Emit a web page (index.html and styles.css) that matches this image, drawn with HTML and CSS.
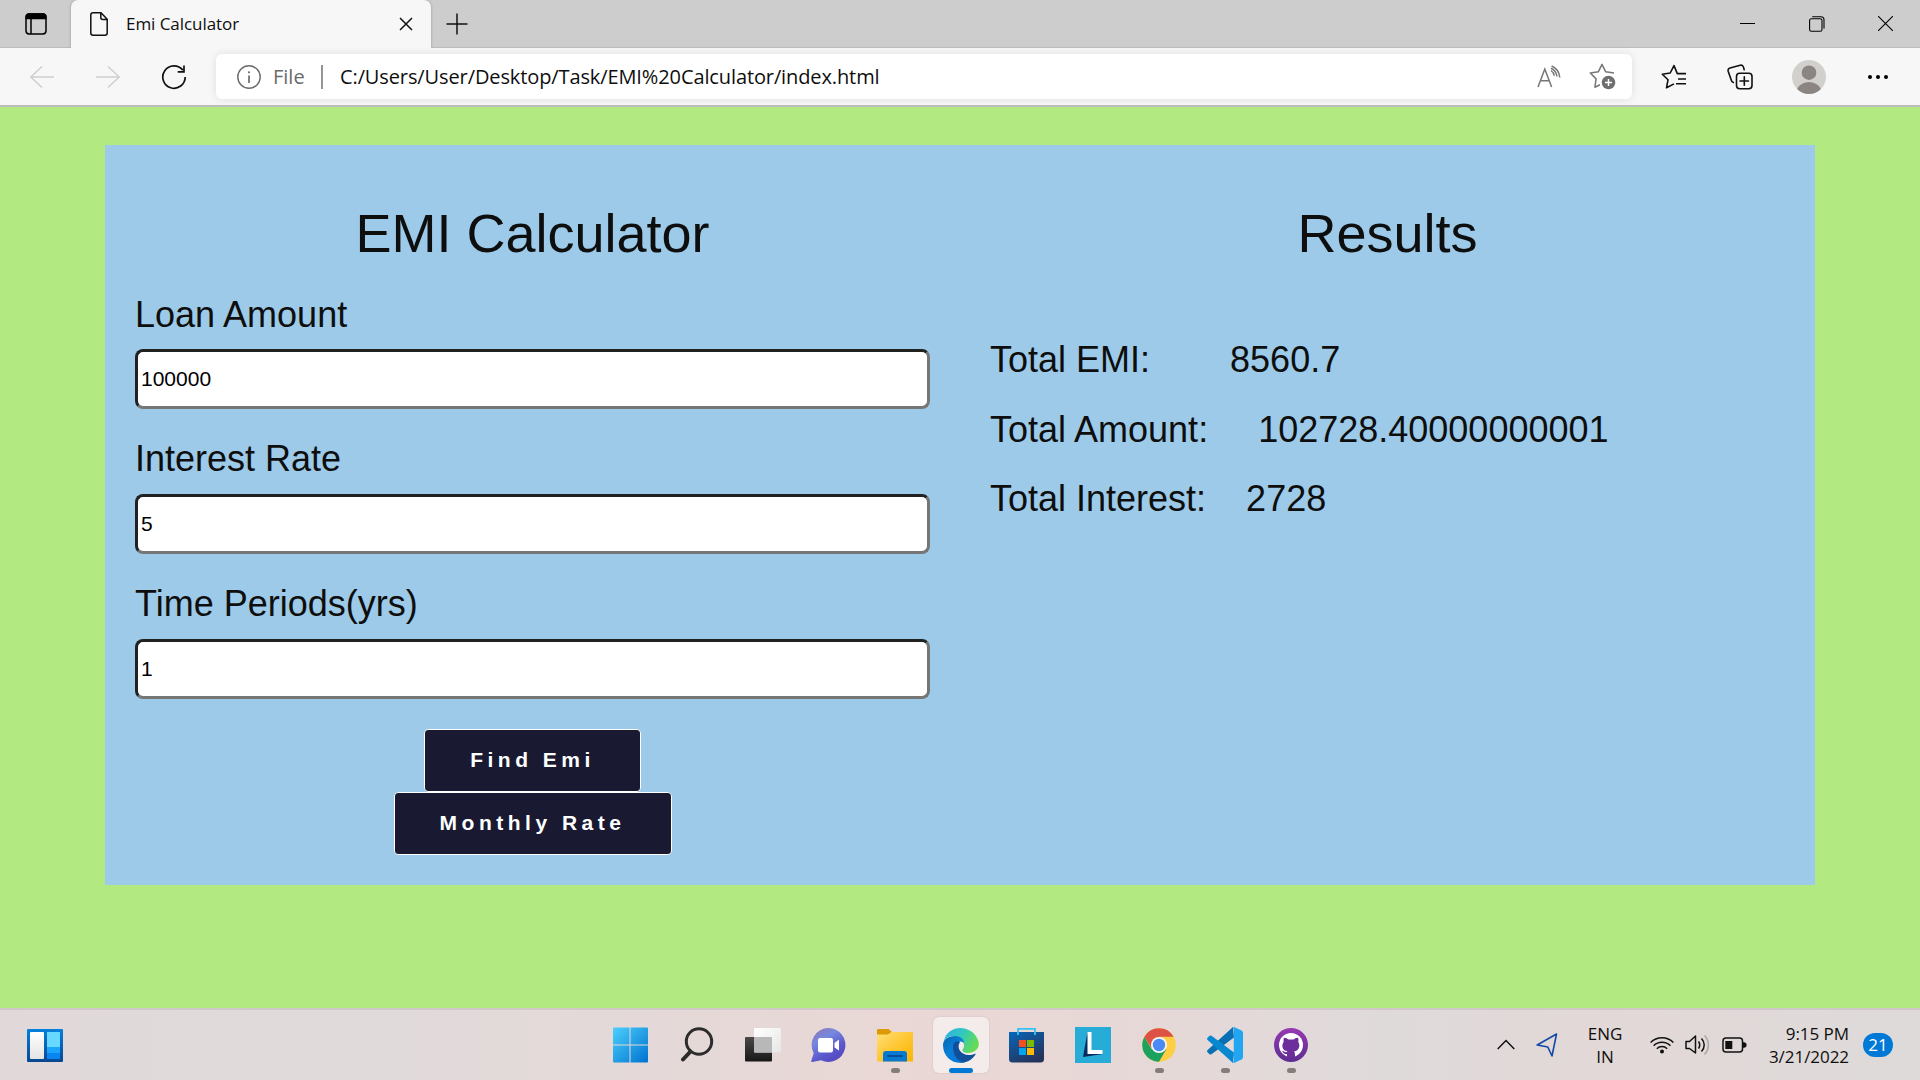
FILE: index.html
```
<!DOCTYPE html>
<html lang="en">
<head>
<meta charset="utf-8">
<title>Emi Calculator</title>
<link rel="stylesheet" href="styles.css">
</head>
<body>
<div class="screen">
  <header class="tabstrip">
    <div class="tab-menu">
      <svg width="22" height="22" viewBox="0 0 22 22" fill="none" stroke="#000" stroke-width="1.5"><rect x="1" y="1" width="20" height="20" rx="3.2"/><path d="M1.2 5.6V4a3 3 0 0 1 3-3h13.600a3 3 0 0 1 3 3v1.600z" fill="#000"/><path d="M6 6v15"/></svg>
    </div>
    <div class="tab">
      <svg class="tab-doc" width="18" height="24" viewBox="0 0 18 24" fill="none" stroke="#111" stroke-width="1.500" stroke-linejoin="round"><path d="M3 .8h8l6.200 6.500v13.700a2.200 2.200 0 0 1-2.200 2.200H3A2.200 2.200 0 0 1 .8 21V3A2.200 2.200 0 0 1 3 .8zM10.800 1v4.500a2 2 0 0 0 2 2H17"/></svg>
      <span class="tab-title">Emi Calculator</span>
      <svg class="tab-close" width="14" height="14" viewBox="0 0 14 14" stroke="#111" stroke-width="1.500"><path d="M1 1l12 12M13 1L1 13"/></svg>
    </div>
    <div class="tab-new">
      <svg width="22" height="22" viewBox="0 0 22 22" stroke="#111" stroke-width="1.500"><path d="M11 .5v21M.5 11h21"/></svg>
    </div>
    <div class="window-controls">
      <span class="win-cell"><svg width="15" height="15" viewBox="0 0 15 15" stroke="#000"><path d="M0 7.500h15"/></svg></span>
      <span class="win-cell"><svg width="16" height="16" viewBox="0 0 16 16" fill="none" stroke="#000" stroke-width="1.100"><rect x=".6" y="2.800" width="12.400" height="12.400" rx="1.800"/><path d="M3.200.7h8.800a3 3 0 0 1 3 3v8.800"/></svg></span>
      <span class="win-cell"><svg width="15" height="15" viewBox="0 0 15 15" stroke="#000" stroke-width="1.100"><path d="M0 0l15 15M15 0L0 15"/></svg></span>
    </div>
  </header>

  <nav class="toolbar">
    <span class="tool"><svg width="26" height="24" viewBox="0 0 26 24" fill="none" stroke="#cfcfcf" stroke-width="1.500"><path d="M25 12H1.500M13 1.500L1.800 12 13 22.500"/></svg></span>
    <span class="tool"><svg width="26" height="24" viewBox="0 0 26 24" fill="none" stroke="#cfcfcf" stroke-width="1.500"><path d="M1 12h23.500M13 1.500L24.200 12 13 22.500"/></svg></span>
    <span class="tool"><svg width="26" height="26" viewBox="0 0 26 26" fill="none" stroke="#111" stroke-width="1.700"><path d="M24.200 13A11.200 11.200 0 1 1 21.800 6.100M23 1.500v6.300h-6.300"/></svg></span>
    <div class="address">
      <svg width="24" height="24" viewBox="0 0 24 24" fill="none" stroke="#6b6b6b" stroke-width="1.400"><circle cx="12" cy="12" r="11.200"/><path d="M12 10.500V18" stroke-width="1.700"/><circle cx="12" cy="7.300" r="1.100" fill="#6b6b6b" stroke="none"/></svg>
      <span class="scheme">File</span>
      <span class="divider"></span>
      <span class="url">C:/Users/User/Desktop/Task/EMI%20Calculator/index.html</span>
      <svg class="read-aloud" width="24" height="24" viewBox="0 0 24 24" fill="none" stroke="#767676" stroke-width="1.500"><path d="M1 22L7.800 4 14.600 22M3.500 15.800h8.700M14 5.500c1.800 1.300 3 3 3.200 5.200M14.600 1c4.400 1.800 7.600 6 8.200 11.500M14 3.300c3.300 1.400 5.500 4.400 6 8.200"/></svg>
      <svg class="add-fav" width="27" height="27" viewBox="0 0 27 27"><path d="M25 10l-8.300-1.200L13 1.300 9.300 8.800 1.300 10l5.800 5.900-1.200 8.300 5-2.400" fill="none" stroke="#767676" stroke-width="1.500" stroke-linejoin="round"/><circle cx="19.500" cy="19.500" r="6.800" fill="#6e6e6e"/><path d="M19.500 16v7M16 19.500h7" stroke="#fff" stroke-width="1.500"/></svg>
    </div>
    <span class="tool"><svg width="26" height="26" viewBox="0 0 26 26" fill="none" stroke="#111" stroke-width="1.600" stroke-linejoin="round"><path d="M25 9.600h-8.700L13 1.600 9.200 9 1.300 10.200l5.700 5.600-1.500 8 7.500-3.900M17 15h8M15 19.800h10"/></svg></span>
    <span class="tool"><svg width="26" height="26" viewBox="0 0 26 26" fill="none" stroke="#111" stroke-width="1.600" stroke-linecap="round"><rect x="9.500" y="9.200" width="15.500" height="15.500" rx="3.200"/><path d="M17.300 12.700v8.500M13 17h8.500M6.400 18.500a3 3 0 0 1-2-2L1.200 7.300A2.600 2.600 0 0 1 3 4.100L13.200 1.300a2.600 2.600 0 0 1 3.200 1.800l.8 2.600"/></svg></span>
    <span class="tool tool-profile"><svg width="34" height="34" viewBox="0 0 34 34"><defs><clipPath id="face"><circle cx="17" cy="17" r="17"/></clipPath></defs><g clip-path="url(#face)"><rect width="34" height="34" fill="#d2d0cd"/><circle cx="17" cy="12.700" r="7.300" fill="#8a8583"/><ellipse cx="17" cy="32" rx="12.300" ry="10" fill="#8a8583"/></g></svg></span>
    <span class="tool"><svg width="22" height="6" viewBox="0 0 22 6" fill="#000"><circle cx="3" cy="3" r="2"/><circle cx="11" cy="3" r="2"/><circle cx="19" cy="3" r="2"/></svg></span>
  </nav>

  <main class="page">
    <div class="panel">
      <section class="column">
        <h1 class="heading">EMI Calculator</h1>
        <div class="field"><label class="label" for="loan">Loan Amount</label><input class="input" id="loan" type="text" value="100000"></div>
        <div class="field"><label class="label" for="rate">Interest Rate</label><input class="input" id="rate" type="text" value="5"></div>
        <div class="field"><label class="label" for="time">Time Periods(yrs)</label><input class="input" id="time" type="text" value="1"></div>
        <div class="actions">
          <button class="button" type="button">Find Emi</button>
          <button class="button button-wide" type="button">Monthly Rate</button>
        </div>
      </section>
      <section class="column">
        <h1 class="heading">Results</h1>
        <div class="results">
          <p class="result">Total EMI:&nbsp;&nbsp;&nbsp;&nbsp;&nbsp;&nbsp;&nbsp;&nbsp;8560.7</p>
          <p class="result">Total Amount:&nbsp;&nbsp;&nbsp;&nbsp;&nbsp;102728.40000000001</p>
          <p class="result">Total Interest:&nbsp;&nbsp;&nbsp;&nbsp;2728</p>
        </div>
      </section>
    </div>
  </main>

  <footer class="taskbar">
    <div class="task-left">
      <svg width="36" height="33" viewBox="0 0 36 33"><defs><linearGradient id="wg" x2="0" y2="1"><stop stop-color="#0580db"/><stop offset="1" stop-color="#08478f"/></linearGradient><linearGradient id="ww" x2="0" y2="1"><stop stop-color="#fff"/><stop offset="1" stop-color="#e4e4e4"/></linearGradient></defs><rect width="36" height="33" rx="1" fill="url(#wg)"/><rect x="3" y="3" width="14" height="27" rx="1" fill="url(#ww)"/><path d="M20 3h13v15H20z" fill="#67d8ff"/><path d="M20 18h13v6H20z" fill="#1aa4fb"/><path d="M20 24h13v6H20z" fill="#0885ee"/></svg>
    </div>
    <div class="apps">
      <span class="app"><svg width="36" height="36" viewBox="0 0 36 36"><defs><linearGradient id="win" x2="1" y2="1"><stop stop-color="#4cd0fd"/><stop offset="1" stop-color="#0072cf"/></linearGradient></defs><path d="M1 .5H16.500v17H0v-16a1 1 0 0 1 1-1zM17.500 .5h16.500a1 1 0 0 1 1 1v16H17.500zM0 18.500H16.500v17H1a1 1 0 0 1-1-1zM17.500 18.500H35v16a1 1 0 0 1-1 1H17.500z" fill="url(#win)"/></svg></span>
      <span class="app"><svg width="36" height="36" viewBox="0 0 36 36" fill="none" stroke="#2c2c2c"><circle cx="20" cy="14.500" r="12.700" stroke-width="3"/><path d="M11.500 24.500l-7.500 8" stroke-width="4" stroke-linecap="round"/></svg></span>
      <span class="app"><svg width="38" height="36" viewBox="0 0 38 36"><defs><linearGradient id="tv" x2="0" y2="1"><stop stop-color="#494949"/><stop offset="1" stop-color="#181818"/></linearGradient><linearGradient id="tw" x2="1" y2="1"><stop stop-color="#fff"/><stop offset="1" stop-color="#e6e6e6"/></linearGradient></defs><rect x="1" y="10" width="27" height="24.500" rx="1" fill="url(#tv)"/><rect x="10" y="1" width="27" height="24.500" rx="1" fill="url(#tw)"/><path d="M10 10h17a1 1 0 0 1 1 1v14.500H11a1 1 0 0 1-1-1z" fill="#b8b8b8"/></svg></span>
      <span class="app"><svg width="36" height="36" viewBox="0 0 36 36"><defs><linearGradient id="chat" x1=".2" x2=".8" y2="1"><stop stop-color="#8b78b9"/><stop offset=".3" stop-color="#7588df"/><stop offset=".65" stop-color="#5c59cc"/><stop offset="1" stop-color="#5147bd"/></linearGradient></defs><path d="M17.500 1a17 17 0 1 1-7.500 32.300L1.500 35c-1 .2-1.500-.6-1.200-1.500l2.400-7.300A17 17 0 0 1 17.500 1z" fill="url(#chat)"/><rect x="7" y="11" width="15" height="14.500" rx="2" fill="#fff"/><path d="M23.500 16l4.500-3.500v11L23.500 20.500z" fill="#fff"/></svg></span>
      <span class="app app-open"><svg width="36" height="34" viewBox="0 0 36 34"><defs><linearGradient id="fold" x2="1" y2="1"><stop stop-color="#ffe07b"/><stop offset=".45" stop-color="#ffc93a"/><stop offset="1" stop-color="#fcb400"/></linearGradient></defs><path d="M0 8V2a1 1 0 0 1 1-1h10.500l3.500 3H35a1 1 0 0 1 1 1v5z" fill="#dc9b04"/><path d="M0 6.500h11l3.500-2.500H35a1 1 0 0 1 1 1v28.500H0z" fill="url(#fold)"/><path d="M6 33.500V26a3 3 0 0 1 3-3h18a3 3 0 0 1 3 3v7.500z" fill="#0879d1"/><path d="M11 28h14" stroke="#064f98" stroke-width="1.800" stroke-linecap="round"/></svg></span>
      <span class="app app-active"><svg width="36" height="36" viewBox="0 0 36 36"><defs><linearGradient id="e1" x2="1" y2=".4"><stop stop-color="#2daeea"/><stop offset=".55" stop-color="#32c9bd"/><stop offset="1" stop-color="#64db55"/></linearGradient><linearGradient id="e2" x2=".8" y2="1"><stop stop-color="#0665ad"/><stop offset=".5" stop-color="#087fd8"/><stop offset="1" stop-color="#0676d2"/></linearGradient></defs><path d="M1 14C4-2 28-4 35 13c3 8-3 13-10 13-4 0-7-2-5-4 2-3 1-6-1-9C14 7 4 8 1 14z" fill="url(#e1)"/><path d="M0 18C0 12 6 9 12 9c5 0 9 3 9 7-5-4-11 1-9 8 2 6 6 10 10 11.500C10 38 0 30 0 18z" fill="url(#e2)"/><path d="M10 20c0-5 4-7 7-5-4 6 1 13 9 13 3 0 5-.7 7-1.500C30 32 25 35.500 20 35.500c-6-2-10-8-10-15.500z" fill="#104f99"/></svg></span>
      <span class="app"><svg width="36" height="36" viewBox="0 0 36 36"><defs><linearGradient id="store" x2=".6" y2="1"><stop stop-color="#0867b8"/><stop offset="1" stop-color="#25345d"/></linearGradient></defs><path d="M0 5h35v27a3.500 3.500 0 0 1-3.500 3.500h-28A3.500 3.500 0 0 1 0 32z" fill="url(#store)"/><path d="M9 8V1.800h17V8" fill="none" stroke="#35c2f4" stroke-width="1.800"/><path d="M10 13h7v7h-7z" fill="#f25022"/><path d="M18 13h7v7h-7z" fill="#7fba00"/><path d="M10 21h7v7h-7z" fill="#00a4ef"/><path d="M18 21h7v7h-7z" fill="#ffb900"/></svg></span>
      <span class="app"><svg width="36" height="36" viewBox="0 0 36 36"><path d="M0 0h36v36H0z" fill="#27abd7"/><path d="M12.500 5L8 30l20-3-14-3z" fill="#082b60"/><path d="M12.500 5h4v18h11v4h-15z" fill="#fff"/></svg></span>
      <span class="app app-open"><svg width="34" height="34" viewBox="0 0 34 34"><circle cx="17" cy="17" r="16.800" fill="#ffcf43"/><path d="M2.300 8.900A16.800 16.800 0 0 1 31.600 8.700H17L9.500 20z" fill="#de5145"/><path d="M2.300 8.900A16.800 16.800 0 0 0 17 33.800l7.300-12.500-14.500 0z" fill="#1ba160"/><circle cx="17" cy="17" r="8" fill="#f5f5f5"/><circle cx="17" cy="17" r="6.200" fill="#4a8af4"/></svg></span>
      <span class="app app-open"><svg width="36" height="36" viewBox="0 0 36 36"><path d="M26 0l1 10.500L4.500 27.200a1.600 1.600 0 0 1-2 0L.6 25.300a1.500 1.500 0 0 1 0-2.200z" fill="#0a70b4"/><path d="M26 36l1-10.500L4.500 8.800a1.600 1.600 0 0 0-2 0L.6 10.700a1.500 1.500 0 0 0 0 2.200z" fill="#0788d1"/><path d="M27 0l7.600 3.500A2.500 2.500 0 0 1 36 5.700v24.600a2.500 2.500 0 0 1-1.400 2.200L27 36l-1-.3.8-1.700V2L26 .3z" fill="#23a6f2"/></svg></span>
      <span class="app app-open"><svg width="34" height="34" viewBox="0 0 34 34"><defs><linearGradient id="gh" x2="0" y2="1"><stop stop-color="#963ab3"/><stop offset="1" stop-color="#5c2d91"/></linearGradient></defs><circle cx="17" cy="17" r="17" fill="url(#gh)"/><circle cx="17" cy="17" r="12" fill="#fff"/><path d="M10 9.800c2 0 3.500 1 4.500 1.800h5c1-.8 2.500-1.800 4.500-1.800.7 1.500.5 3 .2 4 2 2.600 1.800 9-4.200 9.700 1 1 1 2.500 1 5.500h-8v-3c-4 .7-3.500-2.500-5.500-3.200 2.500-.5 3 2 5.400 1.300.1-.3.2-.5.5-.8-5.700-.6-6-6.600-3.600-9.500-.3-1-.5-2.500.2-4z" fill="#6b2e9b"/></svg></span>
    </div>
    <div class="tray">
      <svg class="tray-up" width="18" height="11" viewBox="0 0 18 11" fill="none" stroke="#111" stroke-width="1.500"><path d="M.7 10L9 1.500l8.300 8.500"/></svg>
      <svg class="tray-loc" width="22" height="24" viewBox="0 0 22 24" fill="none" stroke="#1149a5" stroke-width="1.600" stroke-linejoin="round"><path d="M20.500 1L1.200 12l10.600 2L16 23z"/></svg>
      <div class="tray-text tray-lang"><span>ENG</span><span>IN</span></div>
      <svg class="tray-wifi" width="24" height="18" viewBox="0 0 24 18" fill="none" stroke="#111" stroke-width="1.500"><path d="M.6 6.500a16 16 0 0 1 22.800 0M3.600 9.700a11.800 11.800 0 0 1 16.800 0M6.800 12.700a7.500 7.500 0 0 1 10.400 0"/><circle cx="12" cy="15.500" r="2" fill="#111" stroke="none"/></svg>
      <svg class="tray-vol" width="25" height="22" viewBox="0 0 25 22" fill="none" stroke="#111" stroke-width="1.500" stroke-linejoin="round"><path d="M1 7.500h3.500L10.500 2v17L4.500 14.500H1zM13.500 7.500a6 6 0 0 1 0 7M16.500 4.500c3.600 3.800 3.600 9.200 0 13"/><path d="M19.500 1.500c5.200 5.500 5.200 13.500 0 19" stroke="#aaa6a6"/></svg>
      <svg class="tray-bat" width="25" height="16" viewBox="0 0 25 16"><rect x="1" y="1" width="19.500" height="14" rx="3" fill="none" stroke="#111" stroke-width="1.500"/><path d="M3.300 4h7v8h-7z" fill="#111"/><path d="M21.500 5.500l2.500 1v3l-2.500 1z" fill="#111" stroke="#111"/></svg>
      <div class="tray-text tray-clock"><span>9:15 PM</span><span>3/21/2022</span></div>
      <span class="badge">21</span>
    </div>
  </footer>
</div>
</body>
</html>
```
FILE: styles.css
```
* { box-sizing: border-box; }

body {
  margin: 0;
  overflow: hidden;
  color: #0e0e0e;
  font-family: "Liberation Sans", Arial, sans-serif;
}

svg { display: block; flex: none; }

.screen {
  display: flex;
  flex-direction: column;
  width: 1920px;
  height: 1080px;
}

/* Browser tabs */
.tabstrip {
  display: flex;
  height: 48px;
  background: #cdcdcd;
  box-shadow: inset 0 -1px #bdbdbd;
  font-family: "Open Sans", "Noto Sans", sans-serif;
}

.tab-menu {
  display: flex;
  align-items: center;
  width: 71px;
  padding-left: 25px;
}

.tab {
  display: flex;
  align-items: center;
  width: 360px;
  padding: 0 18px 0 19px;
  border-radius: 7px 7px 0 0;
  background: #f7f7f7;
  box-shadow: 0 0 3px rgba(0, 0, 0, .25);
  clip-path: inset(0 -4px 0 -4px);
}

.tab-title {
  flex: 1;
  margin-left: 18px;
  font-size: 17px;
  letter-spacing: -.05px;
  line-height: 48px;
}

.tab-new {
  display: flex;
  align-items: center;
  margin-left: 15px;
}

.tab-menu, .tab-new { padding-bottom: 1px; }

.window-controls {
  display: flex;
  margin-left: auto;
}

.win-cell {
  display: flex;
  align-items: center;
  justify-content: center;
  width: 69px;
  height: 47px;
}

/* Browser toolbar */
.toolbar {
  display: flex;
  align-items: center;
  height: 59px;
  padding: 0 9px;
  border-bottom: 2px solid #bdbdbd;
  background: #f7f7f7;
  font-family: "Open Sans", "Noto Sans", sans-serif;
}

.tool {
  display: flex;
  align-items: center;
  justify-content: center;
  width: 66px;
}

.tool-profile { width: 72px; }

.address {
  display: flex;
  flex: 1;
  align-items: center;
  height: 45px;
  margin: 0 9px;
  padding: 0 16px 0 21px;
  border-radius: 6px;
  background: #fff;
  box-shadow: 0 0 8px rgba(0, 0, 0, .1);
  font-size: 20px;
  line-height: 45px;
}

.scheme {
  width: 48px;
  margin-left: 12px;
  color: #6b6b6b;
}

.divider {
  width: 2px;
  height: 24px;
  background: #949494;
}

.url {
  flex: 1;
  margin-left: 17px;
  letter-spacing: -.11px;
  white-space: nowrap;
}

.add-fav { margin-left: 28px; }

/* Calculator */
.page {
  flex: 1;
  padding: 38px 105px 0;
  background: #b3e981;
}

.panel {
  display: grid;
  grid-template-columns: 1fr 1fr;
  height: 740px;
  background: #9ccae8;
}

.column { padding: 57px 30px 0; }

.heading {
  margin: 0;
  font-size: 54px;
  font-weight: 400;
  line-height: 62px;
  text-align: center;
}

.field {
  display: flex;
  flex-direction: column;
  height: 145px;
}

.heading + .field { margin-top: 30px; }

.label {
  font-size: 36px;
  line-height: 41px;
}

.field + .field .label {
  margin-top: -1px;
  margin-bottom: 1px;
}

.input {
  width: 795px;
  height: 60px;
  margin-top: 14px;
  padding: 0 3px;
  border: 3px solid;
  border-color: #212121 #767676 #767676 #212121;
  border-radius: 8px;
  background: #fff;
  color: #000;
  font: 21px "Liberation Sans", Arial, sans-serif;
}

.actions {
  display: flex;
  flex-direction: column;
  align-items: center;
}

.button {
  height: 63px;
  padding: 0 45px 2px;
  border: 1px solid #fff;
  border-radius: 4px;
  background: #191932;
  color: #fff;
  font: bold 21px "Liberation Sans", Arial, sans-serif;
  letter-spacing: 4.5px;
}

.button-wide { min-width: 278px; }

.results { margin-top: 61px; }

.result {
  margin: 0;
  font-size: 36px;
  line-height: 69.5px;
  white-space: nowrap;
}

/* Taskbar */
.taskbar {
  display: grid;
  grid-template-columns: 598px 726px 1fr;
  align-items: center;
  height: 72px;
  border-top: 2px solid #d0c8c9;
  background: linear-gradient(90deg, #e1d9d9, #e0dada 18%, #e4d9d8 34%, #ead7d5 50%, #e4d9d8 63%, #dfdada 72%, #e2d8d7 84%, #dedada);
}

.task-left { padding-left: 27px; }

.apps {
  display: grid;
  grid-template-columns: repeat(11, 66px);
}

.app {
  position: relative;
  display: flex;
  align-items: center;
  justify-content: center;
  width: 56px;
  height: 56px;
  margin: 0 5px;
  border-radius: 6px;
}

.app-active {
  background: #f4eceb;
  box-shadow: 0 0 2px #c5b9b8;
}

.app-open::after,
.app-active::after {
  position: absolute;
  bottom: 0;
  left: 24px;
  width: 9px;
  height: 5px;
  border-radius: 3px;
  background: #857d7c;
  content: "";
}

.app-active::after {
  left: 16px;
  width: 24px;
  background: #0078d6;
}

.tray {
  display: flex;
  align-items: center;
  padding-left: 173px;
  padding-bottom: 1px;
  font-family: "Open Sans", "Noto Sans", sans-serif;
}

.tray-text {
  display: flex;
  flex-direction: column;
  font-size: 17px;
  line-height: 23px;
}

.tray-loc { margin-left: 21px; }

.tray-lang {
  align-items: center;
  width: 44px;
  margin-right: 1px;
  margin-left: 25px;
}

.tray-wifi { margin-left: 22px; }
.tray-vol { margin-left: 11px; }
.tray-bat { margin-left: 12px; }

.tray-clock {
  align-items: flex-end;
  width: 90px;
  margin-left: 12px;
  letter-spacing: -.05px;
}

.badge {
  width: 30px;
  height: 24px;
  margin-left: 14px;
  border-radius: 12px;
  background: #0078d6;
  color: #fff;
  font-size: 17px;
  line-height: 23px;
  text-align: center;
}
```
